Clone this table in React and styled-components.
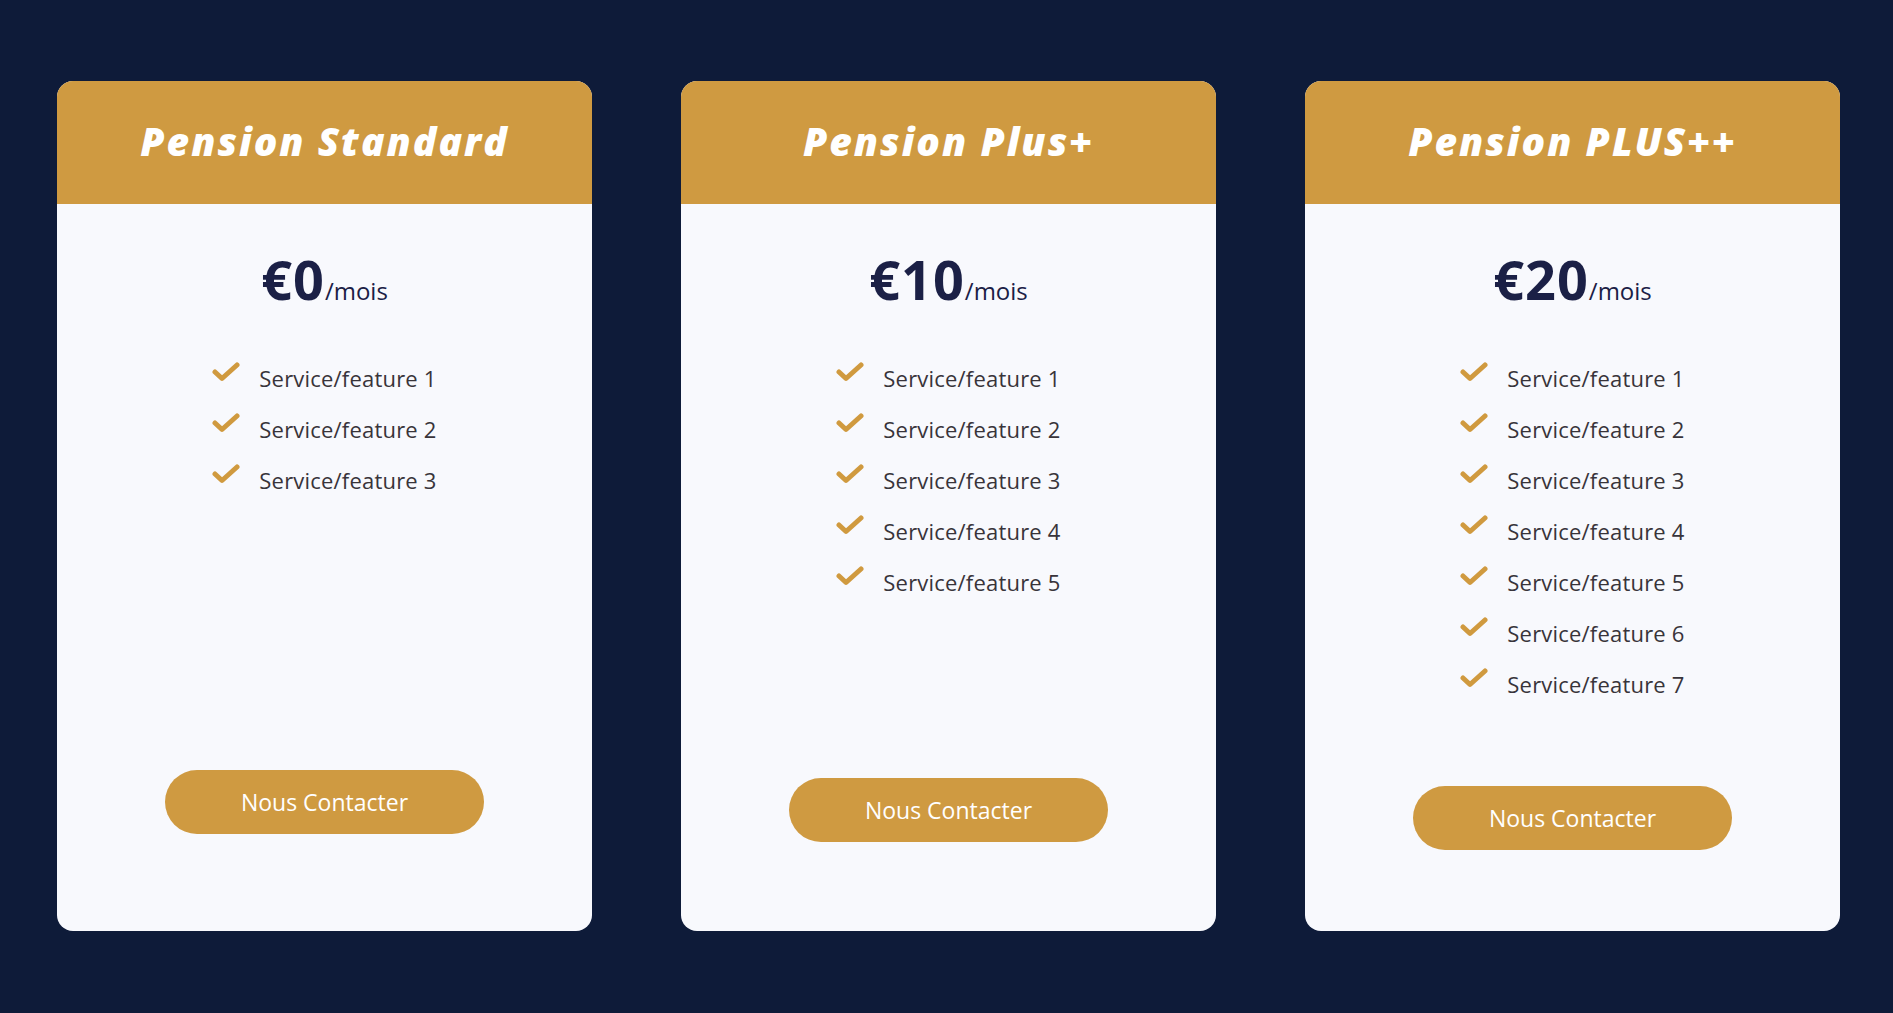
import React from 'react'
import styled, { createGlobalStyle } from 'styled-components'

const GlobalStyle = createGlobalStyle`
    * { box-sizing: border-box; }
    body {
        margin: 0;
        background: #0e1b39;
        font-family: "Open Sans", "Noto Sans", sans-serif;
    }
`

const Page = styled.div`
    min-height: 1013px;
    padding: 81px 53px 82px 57px;
    display: flex;
    justify-content: space-between;
    align-items: stretch;
`

const Card = styled.div`
    width: 535px;
    height: 850px;
    background: #f8f9fd;
    border-radius: 16px;
    overflow: hidden;
    display: flex;
    flex-direction: column;
`

const Header = styled.div`
    height: 123px;
    padding-bottom: 4px;
    background: #cf9a41;
    display: flex;
    align-items: center;
    justify-content: center;
`

const Title = styled.h2`
    margin: 0;
    color: #fff;
    font-size: 39px;
    font-weight: 800;
    font-style: italic;
    letter-spacing: 2px;
`

const Body = styled.div`
    flex: 1;
    display: flex;
    flex-direction: column;
    align-items: center;
    padding: 44px 0 74px;
`

const Price = styled.div`
    display: flex;
    align-items: baseline;
    color: #1b2046;
    height: 62px;
`

const Amount = styled.span`
    font-size: 54px;
    line-height: 62px;
    font-weight: 700;
    letter-spacing: 1px;
`

const Period = styled.span`
    font-size: 24px;
    font-weight: 400;
`

const Features = styled.ul`
    list-style: none;
    margin: 53px 0 0;
    padding: 0;
    display: flex;
    flex-direction: column;
    gap: 21px;
`

const Feature = styled.li`
    display: flex;
    justify-content: center;
    align-items: center;
    gap: 19px;
    height: 30px;
    font-size: 22px;
    letter-spacing: 0.2px;
    color: #38343a;
`

const Check = styled.svg`
    width: 28px;
    height: 22px;
    margin-top: -12px;
    flex-shrink: 0;
`

const Spacer = styled.div`
    flex: ${p => p.$grow};
    min-height: 0;
`

const Button = styled.button`
    width: 319px;
    height: 64px;
    flex-shrink: 0;
    border: none;
    border-radius: 32px;
    background: #cf9a41;
    color: #fff;
    font-family: inherit;
    font-size: 23px;
    cursor: pointer;
`

const plans = [
    { title: 'Pension Standard', price: '€0', count: 3 },
    { title: 'Pension Plus+', price: '€10', count: 5 },
    { title: 'Pension PLUS++', price: '€20', count: 7 },
]

const CheckIcon = () => (
    <Check viewBox="0 0 28 22">
        <polyline points="3,11 10,17.5 25,4" fill="none" stroke="#d09a3f" strokeWidth="5" strokeLinecap="round" strokeLinejoin="round" />
    </Check>
)

const App = () => {
    return (
        <>
            <GlobalStyle />
            <Page>
                {plans.map(plan => (
                    <Card key={plan.title}>
                        <Header>
                            <Title>{plan.title}</Title>
                        </Header>
                        <Body>
                            <Price>
                                <Amount>{plan.price}</Amount>
                                <Period>/mois</Period>
                            </Price>
                            <Features>
                                {Array.from({ length: plan.count }, (_, i) => (
                                    <Feature key={i}>
                                        <CheckIcon />
                                        <span>Service/feature {i + 1}</span>
                                    </Feature>
                                ))}
                            </Features>
                            <Spacer $grow={12} />
                            <Button>Nous Contacter</Button>
                            <Spacer $grow={1} />
                        </Body>
                    </Card>
                ))}
            </Page>
        </>
    )
}

export default App
